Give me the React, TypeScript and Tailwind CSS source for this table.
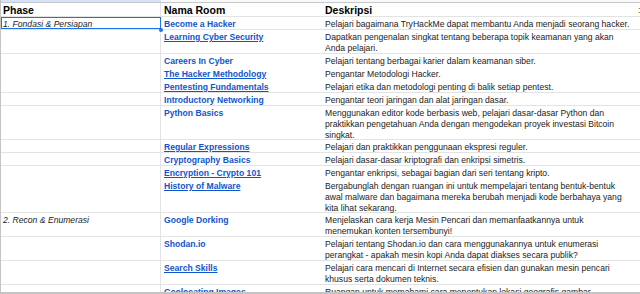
import React from 'react';

type Row = {
  h: number;
  phase?: string;
  rooms: { name: string; u?: boolean }[];
  desc: string[];
  border?: boolean;
  selected?: boolean;
};

const rows: Row[] = [
  {
    h: 13,
    phase: '1. Fondasi & Persiapan',
    rooms: [{ name: 'Become a Hacker' }],
    desc: ['Pelajari bagaimana TryHackMe dapat membantu Anda menjadi seorang hacker.'],
    border: true,
    selected: true,
  },
  {
    h: 24,
    rooms: [{ name: 'Learning Cyber Security', u: true }],
    desc: ['Dapatkan pengenalan singkat tentang beberapa topik keamanan yang akan', 'Anda pelajari.'],
    border: true,
  },
  {
    h: 13,
    rooms: [{ name: 'Careers In Cyber' }],
    desc: ['Pelajari tentang berbagai karier dalam keamanan siber.'],
  },
  {
    h: 13,
    rooms: [{ name: 'The Hacker Methodology', u: true }],
    desc: ['Pengantar Metodologi Hacker.'],
  },
  {
    h: 13,
    rooms: [{ name: 'Pentesting Fundamentals', u: true }],
    desc: ['Pelajari etika dan metodologi penting di balik setiap pentest.'],
    border: true,
  },
  {
    h: 13,
    rooms: [{ name: 'Introductory Networking' }],
    desc: ['Pengantar teori jaringan dan alat jaringan dasar.'],
    border: true,
  },
  {
    h: 34,
    rooms: [{ name: 'Python Basics' }],
    desc: [
      'Menggunakan editor kode berbasis web, pelajari dasar-dasar Python dan',
      'praktikkan pengetahuan Anda dengan mengodekan proyek investasi Bitcoin',
      'singkat.',
    ],
    border: true,
  },
  {
    h: 13,
    rooms: [{ name: 'Regular Expressions', u: true }],
    desc: ['Pelajari dan praktikkan penggunaan ekspresi reguler.'],
    border: true,
  },
  {
    h: 13,
    rooms: [{ name: 'Cryptography Basics' }],
    desc: ['Pelajari dasar-dasar kriptografi dan enkripsi simetris.'],
    border: true,
  },
  {
    h: 13,
    rooms: [{ name: 'Encryption - Crypto 101', u: true }],
    desc: ['Pengantar enkripsi, sebagai bagian dari seri tentang kripto.'],
  },
  {
    h: 34,
    rooms: [{ name: 'History of Malware', u: true }],
    desc: [
      'Bergabunglah dengan ruangan ini untuk mempelajari tentang bentuk-bentuk',
      'awal malware dan bagaimana mereka berubah menjadi kode berbahaya yang',
      'kita lihat sekarang.',
    ],
    border: true,
  },
  {
    h: 24,
    phase: '2. Recon & Enumerasi',
    rooms: [{ name: 'Google Dorking' }],
    desc: ['Menjelaskan cara kerja Mesin Pencari dan memanfaatkannya untuk', 'menemukan konten tersembunyi!'],
    border: true,
  },
  {
    h: 24,
    rooms: [{ name: 'Shodan.io' }],
    desc: [
      'Pelajari tentang Shodan.io dan cara menggunakannya untuk enumerasi',
      'perangkat - apakah mesin kopi Anda dapat diakses secara publik?',
    ],
    border: true,
  },
  {
    h: 24,
    rooms: [{ name: 'Search Skills', u: true }],
    desc: [
      'Pelajari cara mencari di Internet secara efisien dan gunakan mesin pencari',
      'khusus serta dokumen teknis.',
    ],
    border: true,
  },
  {
    h: 24,
    rooms: [{ name: 'Geolocating Images' }],
    desc: ['Ruangan untuk memahami cara menentukan lokasi geografis gambar.'],
  },
];

export default function App() {
  return (
    <div
      className="w-[640px] h-[294px] overflow-hidden bg-white flex flex-col border-l-[1.5px] border-[#c4c4c4] text-[8.6px] leading-[11px] text-[#222]"
      style={{ fontFamily: '"Liberation Sans", Arial, sans-serif' }}
    >
      {/* column header strip */}
      <div className="flex h-[3px] shrink-0 border-b border-[#c7c7c7]">
        <div className="w-[160px] bg-[#d3e3fd]" />
        <div className="flex-1 bg-[#f8f9fa]" />
      </div>

      <div className="flex-1 overflow-hidden">
        {/* header row */}
        <div className="flex h-[14px] border-b border-[#e2e3e3] font-bold text-black text-[10.5px] leading-[14px]">
          <div className="w-[160px] shrink-0 px-[2px] border-r border-[#e2e3e3]">Phase</div>
          <div className="w-[160px] shrink-0 px-[3px]">Nama Room</div>
          <div className="w-[317px] shrink-0 px-[4px]">Deskripsi</div>
          <div className="flex-1 text-[9px] font-normal text-[#444]">:</div>
        </div>

        {rows.map((r, i) => (
          <div
            key={i}
            className={`flex shrink-0 ${r.border ? 'border-b border-[#e2e3e3]' : ''}`}
            style={{ height: r.h }}
          >
            <div
              className={`relative w-[160px] shrink-0 px-[2px] pt-[2px] italic whitespace-nowrap ${
                r.selected ? 'outline outline-1 outline-[#1a73e8] -outline-offset-1' : 'border-r border-[#e2e3e3]'
              }`}
            >
              {r.phase}
              {r.selected && (
                <span className="absolute right-[-2px] bottom-[-3px] w-[4px] h-[4px] rounded-full bg-[#1a73e8] z-10" />
              )}
            </div>
            <div className="w-[160px] shrink-0 px-[3px] pt-[2px] font-bold text-[#1155cc] whitespace-nowrap">
              {r.rooms.map((room) => (
                <div key={room.name} className={room.u ? 'underline' : ''}>
                  {room.name}
                </div>
              ))}
            </div>
            <div className="w-[317px] shrink-0 px-[4px] pt-[2px] whitespace-nowrap">
              {r.desc.map((line, j) => (
                <div key={j}>{line}</div>
              ))}
            </div>
            <div className="flex-1" />
          </div>
        ))}
      </div>

      {/* bottom edge */}
      <div className="h-[2px] shrink-0 bg-[#c4c4c4]" />
    </div>
  );
}
